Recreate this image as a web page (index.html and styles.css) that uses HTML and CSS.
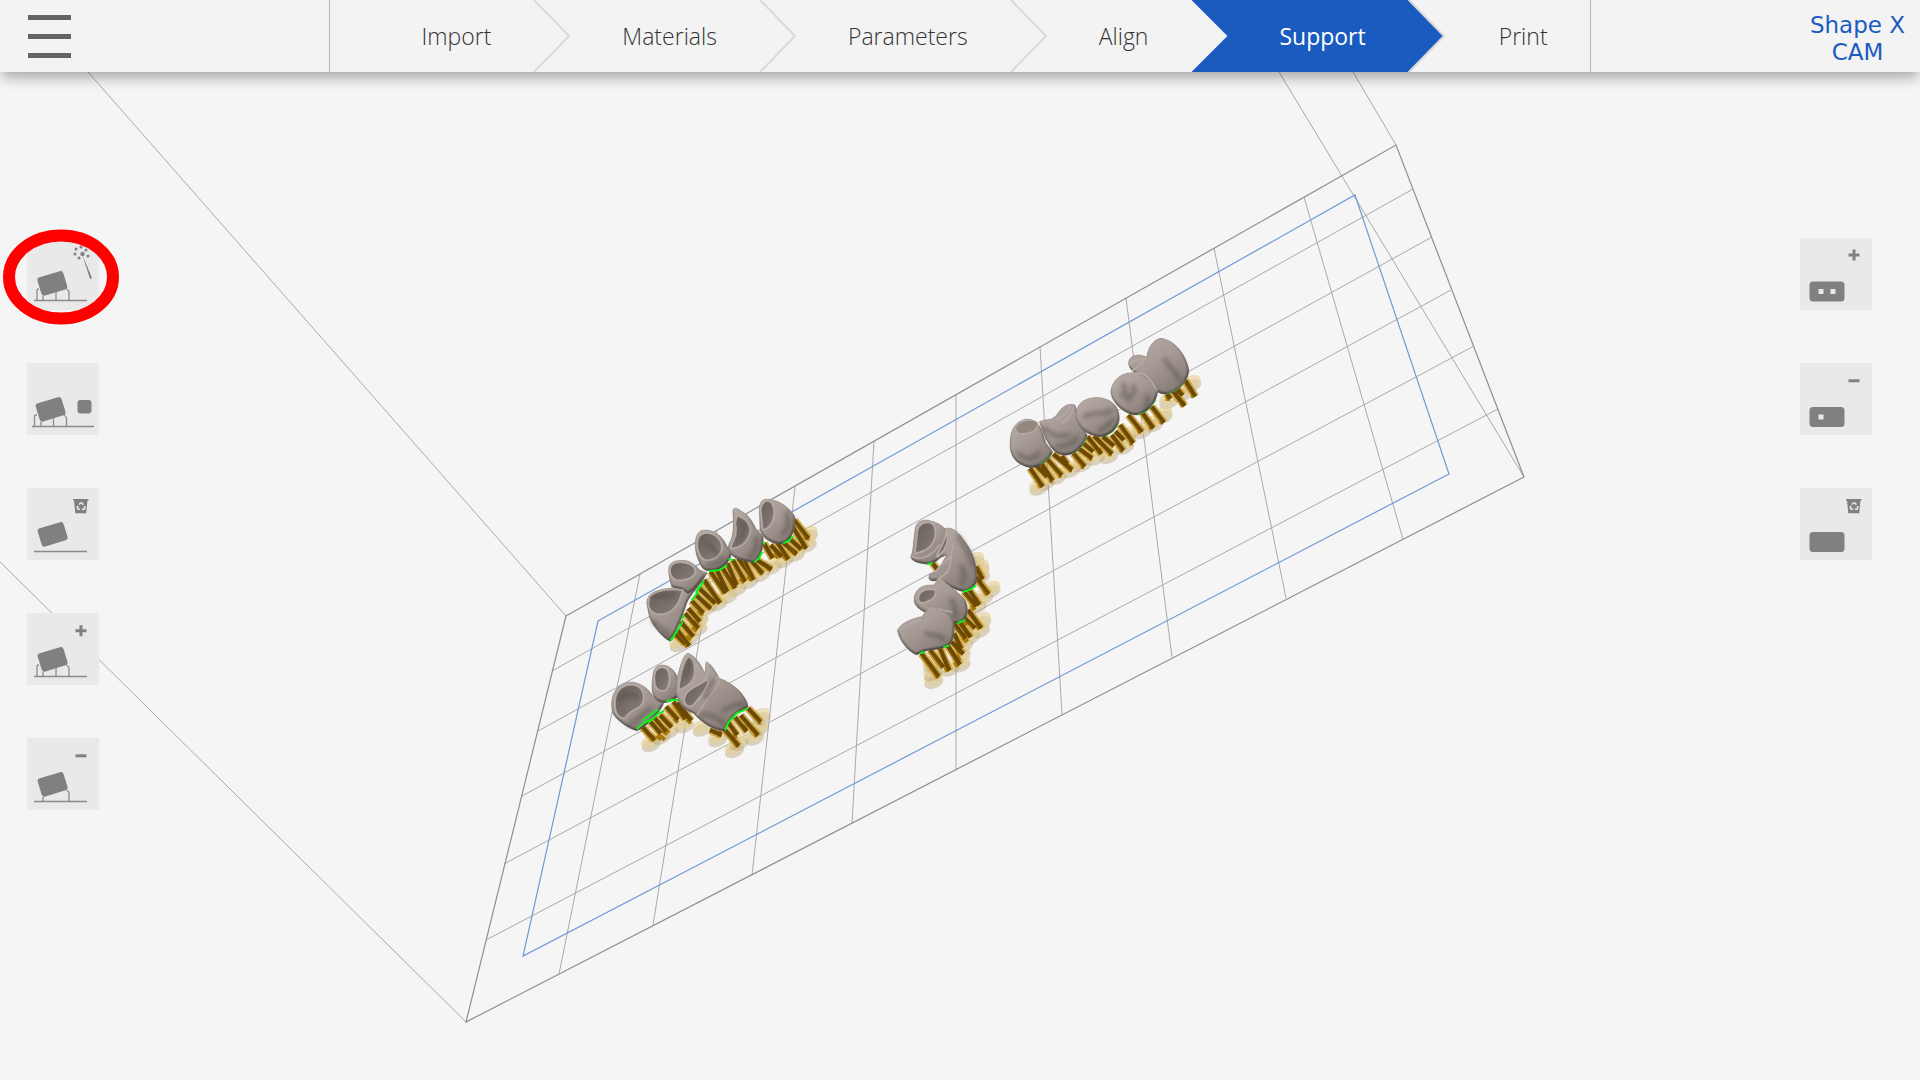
FILE: index.html
```html
<!DOCTYPE html>
<html lang="en">
<head>
<meta charset="utf-8">
<meta name="viewport" content="width=device-width, initial-scale=1">
<title>Shape X CAM</title>
<link rel="stylesheet" href="styles.css">
</head>
<body>
<header class="topbar">
  <button class="menu" type="button" aria-label="Menu"><span></span><span></span><span></span></button>
  <nav class="steps" aria-label="Workflow">
    <a class="step" href="#import">Import<svg class="chevron" viewBox="0 0 36 72" aria-hidden="true"><path d="M0 0L35 36L0 72"/></svg></a>
    <a class="step" href="#materials">Materials<svg class="chevron" viewBox="0 0 36 72" aria-hidden="true"><path d="M0 0L35 36L0 72"/></svg></a>
    <a class="step" href="#parameters">Parameters<svg class="chevron" viewBox="0 0 36 72" aria-hidden="true"><path d="M0 0L35 36L0 72"/></svg></a>
    <a class="step" href="#align">Align</a>
    <a class="step active" href="#support" aria-current="step"><span>Support</span><svg class="chevron" viewBox="0 0 36 72" aria-hidden="true"><path d="M0 0L35 36L0 72"/></svg></a>
    <a class="step" href="#print">Print</a>
  </nav>
  <p class="brand">Shape X<br>CAM</p>
</header>

<main class="workspace">
  <svg class="scene" viewBox="0 72 1920 1008" role="img" aria-label="Build platform with dental parts">
    <defs>
      <linearGradient id="enamel" x1="0" y1="0" x2=".7" y2="1">
        <stop offset="0" stop-color="#b8ada6"/><stop offset=".5" stop-color="#a69b94"/><stop offset="1" stop-color="#857b75"/>
      </linearGradient>
      <linearGradient id="hollow" x1="0" y1="0" x2="1" y2="1">
        <stop offset="0" stop-color="#665f5a"/><stop offset=".6" stop-color="#7a716c"/><stop offset="1" stop-color="#8f857f"/>
      </linearGradient>
      <filter id="relief" x="-5%" y="-5%" width="110%" height="110%" color-interpolation-filters="sRGB">
        <feGaussianBlur in="SourceAlpha" stdDeviation="4" result="b"/>
        <feDiffuseLighting in="b" surfaceScale="7" diffuseConstant="1.2" lighting-color="#fff" result="l"><feDistantLight azimuth="250" elevation="58"/></feDiffuseLighting>
        <feComposite in="l" in2="SourceGraphic" operator="arithmetic" k1=".6" k3=".4" result="m"/>
        <feComposite in="m" in2="SourceAlpha" operator="in" result="n"/>
        <feMerge><feMergeNode in="SourceGraphic"/><feMergeNode in="n"/></feMerge>
      </filter>
      <filter id="soft" x="-30%" y="-30%" width="160%" height="160%"><feGaussianBlur stdDeviation="7"/></filter>
      <g id="pad"><ellipse cx="-3" cy="12" rx="30" ry="18" transform="rotate(-22)" fill="#b7a77a" fill-opacity=".45"/><ellipse rx="30" ry="18" transform="rotate(-22)" fill="#e6cf8f" fill-opacity=".6"/></g>
    </defs>

    <g class="grid">
      <path d="M640 574L559 974M717 530L653 925M795 487L752 875M874 441L852 823M956 394V770M1040 347L1062 714M1126 298L1172 657M1214 248L1286 598M1304 197L1403 539"/>
      <path d="M552 671L1413 189M538 731L1432 237M522 796L1451 290M504 864L1474 346M486 940L1498 409"/>
      <path d="M566 616L88 72M466 1022L-8 554M1396 145L1353 72M1524 477L1279 72"/>
    </g>
    <path class="plate" d="M566 616L1396 145L1524 477L466 1022Z"/>
    <path class="safe" d="M598 621L1355 195L1449 474L523 956Z"/>

    <!-- upper left bridge -->
    <g transform="translate(590 480) scale(.33333)">
      <g>
        <use href="#pad" x="654" y="157"/><use href="#pad" x="650" y="186"/><use href="#pad" x="615" y="214"/><use href="#pad" x="580" y="232"/><use href="#pad" x="545" y="252"/><use href="#pad" x="510" y="275"/><use href="#pad" x="475" y="295"/><use href="#pad" x="440" y="317"/><use href="#pad" x="412" y="340"/><use href="#pad" x="382" y="362"/><use href="#pad" x="350" y="375"/><use href="#pad" x="326" y="410"/><use href="#pad" x="322" y="438"/><use href="#pad" x="298" y="465"/><use href="#pad" x="266" y="484"/>
      </g>
      <use class="amber" href="#pins-a"/>
      <path class="foot" d="M652 170l-4 10M645 196l-5 10M617 213l-8 10M590 228l-8 10M562 222l-8 10M540 262l-8 8M515 274l-8 8M484 292l-8 8M460 298l-8 8M436 312l-8 8M408 328l-8 8M386 360l-8 8M360 378l-8 8M336 396l-8 8M322 425l-8 8M318 443l-8 8M300 470l-8 8M290 490l-8 8"/>
      <g class="pin"><path id="pins-a" d="M612 120L655 175M608 140L648 205M592 170L634 208M580 188L620 222M562 188L595 238M542 195L575 230M522 190L548 235M500 240L545 268M485 244L518 280M462 240L490 300M445 235L485 290M428 240L465 305M412 250L440 315M398 265L435 325M380 270L412 335M362 275L405 340M342 300L390 370M328 325L376 370M318 345L362 385M305 362L340 400M295 385L330 425M285 400L325 445M272 425L310 470M262 450L298 498M255 462L285 490"/></g>
      <path class="shine" d="M612 125L651 176M588 185L615 222M558 192L590 238M458 242L485 300M425 244L460 305M394 265L430 325M359 280L400 340M338 305L384 370M302 364L335 400M282 404L320 445M258 454L292 498"/>
      <g class="tooth">
        <path d="M170 370C172 335 205 325 275 322L330 270L352 278C330 320 305 335 290 370C278 410 262 450 240 484C215 470 190 440 178 410Z"/>
        <path d="M236 270C234 245 260 238 290 242C320 250 328 275 345 285C330 310 300 345 290 340C285 325 250 325 245 320C240 300 236 290 236 270Z"/>
        <path d="M316 185C318 160 330 148 350 150C385 155 400 175 412 200L425 220C420 250 390 275 360 272C335 275 330 250 325 240C316 220 315 200 316 185Z"/>
        <path d="M428 90C435 78 445 88 460 97C480 110 490 130 497 145L520 170C520 200 515 240 490 248C470 245 440 240 425 225C410 210 415 195 420 185C430 170 432 130 428 90Z"/>
        <path d="M508 90C508 62 520 52 545 60C570 62 600 85 615 110C615 150 605 190 570 192C540 192 515 170 510 150Z"/>
      </g>
      <g class="cavity">
        <path d="M178 350C200 330 240 325 278 330C270 360 262 385 235 398C205 410 180 400 175 375Z"/>
        <path d="M240 270C240 250 262 243 285 248C308 252 320 266 315 280C305 298 280 304 258 300C245 295 240 285 240 270Z"/>
        <path d="M322 190C322 165 340 155 360 160C385 165 398 190 396 205C390 235 365 243 345 240C328 232 320 210 322 190Z"/>
        <path d="M440 108C465 112 485 135 480 160C470 190 450 205 422 205C425 185 445 170 436 130Z"/>
        <path d="M512 90C514 66 530 58 542 66C556 80 555 110 545 130C535 145 525 150 518 148Z"/>
      </g>
      <g class="shade"><path d="M190 425C210 445 225 450 240 470M590 100C600 130 590 150 580 160M355 255C380 255 390 245 400 235M500 175C502 205 490 220 480 232M195 350C215 345 235 350 250 345M350 190C360 200 370 200 380 220M460 130C465 150 460 170 450 180"/></g>
      <path class="contact" d="M242 482L260 455L278 425M282 405L275 418M325 335L305 362M342 302L318 340L328 318M357 274L388 270L412 255M415 238L430 240M492 246L508 234L516 215M520 186L524 194M580 190L600 180L608 168"/>
    </g>

    <!-- lower left bridge -->
    <g transform="translate(590 480) scale(.33333)">
      <g>
        <use href="#pad" x="182" y="784"/><use href="#pad" x="212" y="762"/><use href="#pad" x="236" y="745"/><use href="#pad" x="244" y="700"/><use href="#pad" x="282" y="728"/><use href="#pad" x="335" y="738"/><use href="#pad" x="382" y="770"/><use href="#pad" x="432" y="802"/><use href="#pad" x="445" y="780"/><use href="#pad" x="492" y="765"/><use href="#pad" x="506" y="738"/><use href="#pad" x="512" y="704"/>
      </g>
      <use class="amber" href="#pins-b"/>
      <path class="foot" d="M195 770l-10 10M215 765l-12 12M235 748l-14 14M222 770l-8 8M262 718l-8 8M300 720l-8 8M395 762l-12 -2M445 792l-10 4M440 765l-10 4M500 762l-8 2M512 724l-8 2M470 740l-10 8"/>
      <g class="pin"><path id="pins-b" d="M155 738L192 780M175 718L212 760M192 712L228 755M210 705L245 742M228 680L264 720M250 665L286 718M262 668L304 722M360 750L395 765M405 750L446 798M415 728L442 765M435 712L470 755M452 706L504 766M474 685L512 726"/></g>
      <path class="shine" d="M151 742L186 780M188 714L222 755M246 668L282 718M402 754L440 798M431 714L464 755M450 712L498 766M471 690L506 726"/>
      <g class="tooth">
        <path d="M65 680C62 640 85 608 120 606C150 606 175 625 190 650L222 668C210 700 165 745 140 752C110 745 75 715 68 700Z"/>
        <path d="M188 590C190 560 205 552 225 556C245 560 260 580 265 600L268 645C250 668 215 675 200 660C185 650 183 620 188 590Z"/>
        <path d="M260 600C270 560 280 520 295 520C320 530 335 560 345 580L348 545C362 550 375 570 388 595C430 610 465 640 475 680C455 695 425 700 405 754C360 750 330 720 310 700C285 690 268 680 258 640Z"/>
      </g>
      <g class="cavity">
        <path d="M75 670C75 630 100 612 130 614C160 620 168 650 155 675C140 690 120 690 105 715C85 715 74 700 75 670Z"/>
        <path d="M193 590C195 562 215 558 230 566C242 585 240 610 230 630C215 638 200 630 195 615Z"/>
        <path d="M268 610C275 570 285 535 298 530C315 545 318 575 310 595C300 615 280 625 266 630Z"/>
        <path d="M282 660C285 635 305 625 330 612C345 605 352 595 355 605C350 630 330 650 310 675C295 685 285 675 282 660Z"/>
      </g>
      <path class="rim" d="M349 548C360 575 350 590 340 605M388 598C390 620 350 650 322 705M382 590C380 625 345 635 325 660"/>
      <g class="shade"><path d="M335 705C360 700 380 710 400 730M400 690C425 680 440 670 462 672M90 660C100 640 120 640 140 650M120 735C140 725 160 700 180 685M345 650C355 630 365 620 370 600M285 590C295 575 300 560 300 545"/></g>
      <path class="contact" d="M140 748L160 730L190 715L205 700M158 722L175 708L205 688M175 728L200 705L222 692M228 664L245 660L265 660M405 750L415 728L440 700L472 686"/>
    </g>

    <!-- centre bridge -->
    <g transform="translate(880 500) scale(.33333)">
      <g>
        <use href="#pad" x="284" y="176"/><use href="#pad" x="298" y="198"/><use href="#pad" x="300" y="222"/><use href="#pad" x="332" y="262"/><use href="#pad" x="310" y="284"/><use href="#pad" x="290" y="310"/><use href="#pad" x="304" y="356"/><use href="#pad" x="300" y="382"/><use href="#pad" x="270" y="402"/><use href="#pad" x="250" y="425"/><use href="#pad" x="242" y="455"/><use href="#pad" x="242" y="485"/><use href="#pad" x="208" y="498"/><use href="#pad" x="160" y="535"/><use href="#pad" x="158" y="512"/><use href="#pad" x="156" y="485"/>
      </g>
      <use class="amber" href="#pins-c"/>
      <path class="foot" d="M305 232l-10 6M322 275l-10 6M296 300l-12 8M285 320l-12 6M300 375l-12 8M268 400l-14 8M262 415l-12 8M242 450l-12 6M235 490l-12 6M205 505l-12 4M175 525l-10 4M240 470l-14 8M260 365l-12 10"/>
      <g class="pin"><path id="pins-c" d="M158 190L175 212M288 200L308 238M282 225L326 282M265 265L298 315M252 275L288 320M264 330L304 385M250 350L285 385M236 362L272 412M222 370L256 415M222 400L244 446M200 432L240 494M178 440L208 512M150 450L190 502M124 460L176 530M215 425L250 462"/></g>
      <path class="shine" d="M278 228L320 282M249 278L283 320M246 352L280 385M218 374L250 415M196 436L233 494M146 452L186 502M120 462L170 530"/>
      <g class="tooth">
        <path d="M105 90C105 65 130 55 150 62C180 68 200 85 205 105L190 160C175 185 155 195 135 192C110 190 90 180 92 168C100 160 100 120 105 90Z"/>
        <path d="M195 85C225 78 245 110 262 135C280 160 292 200 291 240C285 265 265 275 250 275C220 270 190 245 175 240C150 250 140 235 150 222C170 220 185 190 200 165L165 180C160 165 185 140 190 120Z"/>
        <path d="M102 300C102 270 125 252 160 255L182 232C200 255 235 275 255 300C270 330 262 365 235 370C210 370 180 360 150 345C120 330 103 320 102 300Z"/>
        <path d="M52 392C60 370 95 355 125 350L150 318C180 325 215 345 222 370C225 400 222 430 200 440C170 452 140 445 110 465C85 455 60 425 52 392Z"/>
      </g>
      <g class="cavity">
        <path d="M112 95C115 70 140 62 158 72C172 90 168 120 150 140C135 155 118 155 105 162Z"/>
        <path d="M115 298C115 275 135 264 166 270C170 290 160 298 145 303C130 312 118 312 115 298Z"/>
        <path d="M178 150C192 125 196 110 202 98C206 125 198 150 172 172Z"/>
      </g>
      <path class="rim" d="M220 138C208 165 218 190 202 215C195 225 180 232 172 238M215 170C195 180 180 200 165 215M60 388C80 375 105 362 122 360M95 170C120 180 150 175 178 135M175 325C190 335 205 330 218 338"/>
      <g class="shade"><path d="M235 110C250 135 270 160 280 195M215 300C230 320 225 340 225 350M140 400C160 410 180 400 190 420M245 200C255 220 250 240 245 250"/></g>
      <path class="contact" d="M142 193L158 190M248 276L272 268L288 256M232 370L256 360M120 460L134 456M190 442L208 436"/>
    </g>

    <!-- upper right bridge -->
    <g transform="translate(990 320) scale(.33333)">
      <g>
        <use href="#pad" x="604" y="185"/><use href="#pad" x="575" y="215"/><use href="#pad" x="535" y="236"/><use href="#pad" x="518" y="280"/><use href="#pad" x="490" y="305"/><use href="#pad" x="455" y="325"/><use href="#pad" x="410" y="340"/><use href="#pad" x="402" y="372"/><use href="#pad" x="355" y="400"/><use href="#pad" x="315" y="405"/><use href="#pad" x="275" y="425"/><use href="#pad" x="240" y="442"/><use href="#pad" x="200" y="462"/><use href="#pad" x="165" y="480"/><use href="#pad" x="145" y="495"/>
      </g>
      <use class="amber" href="#pins-d"/>
      <path class="foot" d="M155 495l-10 -2M188 480l-10 0M215 465l-10 0M246 448l-10 0M282 438l-10 0M306 412l-10 2M335 390l-12 4M365 400l-10 0M398 388l-10 2M428 368l-10 0M450 332l-8 2M490 322l-12 -4M520 305l-10 -2M582 254l-8 -6M612 226l-8 -2M540 235l-12 -2M570 215l-10 -4"/>
      <g class="pin"><path id="pins-d" d="M120 445L158 500M140 438L172 470M155 432L188 482M172 418L215 466M190 402L246 450M215 408L232 432M250 400L284 440M265 385L306 415M280 370L310 395M292 350L334 402M312 348L366 402M338 350L372 378M365 345L400 392M376 335L402 360M390 315L430 370M415 285L456 336M455 275L490 325M485 260L522 308M530 222L542 236M550 214L584 258M562 208L578 226M586 182L616 230"/></g>
      <path class="shine" d="M116 448L152 500M168 420L209 466M246 402L278 440M288 354L328 402M361 348L394 392M386 318L424 370M411 288L450 336M481 262L516 308M582 186L610 230"/>
      <g class="tooth">
        <path d="M470 110C475 75 500 50 520 56C560 65 590 110 597 150C595 185 565 215 535 222C510 225 500 215 490 200L430 155C410 140 412 115 430 108C450 100 460 110 470 110Z"/>
        <path d="M362 215C365 185 390 158 425 158C460 160 495 190 503 215C500 250 470 280 440 285C405 285 365 250 362 215Z"/>
        <path d="M60 370C60 320 85 298 115 297C145 300 160 330 165 365L188 395C180 425 140 445 120 443C80 435 58 410 60 370Z"/>
        <path d="M148 305C170 295 180 305 200 285C215 260 235 248 255 255C265 290 275 320 292 345C285 380 250 410 220 405C190 400 180 380 165 350Z"/>
        <path d="M258 285C258 250 285 230 330 233C370 238 390 265 388 300C380 335 350 352 325 350C290 345 258 320 258 285Z"/>
      </g>
      <path class="dimple" d="M76 325C85 300 125 294 143 308C146 332 118 345 84 340Z"/>
      <path class="rim" d="M200 300C220 290 235 275 240 258M215 310C235 300 245 280 250 265M418 135C425 120 450 115 468 118M428 152C440 140 455 135 460 120M436 160C465 155 480 175 500 210M368 205C372 195 385 190 390 188"/>
      <g class="shade"><path d="M395 225C420 240 440 220 430 200M400 195C410 215 405 230 415 240M285 290C310 270 340 290 365 270M330 330C350 320 360 310 368 300M165 325C190 350 210 350 235 345M200 380C225 380 250 370 260 355M85 400C105 420 125 420 145 400M525 120C545 150 560 160 570 180M470 230C480 240 475 250 465 260"/></g>
      <path class="contact thin" d="M150 432L170 420L188 400M250 402L275 380L292 350M345 350L370 335L388 310M440 285L470 275L500 240M530 222L560 210L585 182"/>
    </g>
  </svg>

  <div class="toolbar left" role="toolbar" aria-label="Supports">
    <div class="highlighted">
      <button class="tool" type="button" aria-label="Generate supports automatically">
        <svg viewBox="0 0 72 72"><rect x="12" y="36" width="27" height="19" rx="3" transform="rotate(-17 25 46)"/><path class="ln" d="M7 62.500H60M10 62V52Q10 51 12 51M16 62V58M29 62V53M42 62V54Q42 52 39 51"/><path d="M55 16L65 40L63 41Z"/><g><circle cx="49" cy="11" r="1.5"/><circle cx="54" cy="9" r="1.5"/><circle cx="59" cy="12" r="1.5"/><circle cx="61" cy="18" r="1.5"/><circle cx="52" cy="20" r="1.5"/><circle cx="48" cy="16" r="1.5"/><circle cx="55.500" cy="16" r="2.200"/></g></svg>
      </button>
      <svg class="ring" viewBox="0 0 116 96" aria-hidden="true"><ellipse cx="58" cy="48" rx="52" ry="41.500"/></svg>
    </div>
    <button class="tool" type="button" aria-label="Support selected part">
      <svg viewBox="0 0 72 72"><rect x="10" y="37" width="27" height="19" rx="3" transform="rotate(-17 23 46)"/><path class="ln" d="M5 63.500H67M7.500 63V53Q8 52 10 52M14 63V59M26.500 63V54M39.500 63V55Q39 53 37 52"/><rect x="50.500" y="37" width="14" height="13.500" rx="3"/></svg>
    </button>
    <button class="tool" type="button" aria-label="Delete all supports">
      <svg viewBox="0 0 72 72"><rect x="12" y="37" width="27" height="19" rx="3" transform="rotate(-17 25 46)"/><path class="ln" d="M7 63.500H60"/><path d="M46 11H61.500V12.500H60.500L59.200 25.300H48.300L47 12.500H46Z"/><path class="recycle" d="M52 16.500L53.500 15H55L56.300 16.700M57.200 18L58 19.500L57 21.200H54.800M53 21.200H51.200L50.200 19.500L51.200 17.800"/></svg>
    </button>
    <button class="tool" type="button" aria-label="Add support">
      <svg viewBox="0 0 72 72"><rect x="12" y="37" width="27" height="19" rx="3" transform="rotate(-17 25 46)"/><path class="ln" d="M7 63.500H60M10 63V53Q10 52 12 52M16 63V59M29 63V54M42 63V55Q42 53 39 52"/><path d="M52.500 12.300H55.500V16.300H59.500V19.300H55.500V23.300H52.500V19.300H48.500V16.300H52.500Z"/></svg>
    </button>
    <button class="tool" type="button" aria-label="Remove support">
      <svg viewBox="0 0 72 72"><rect x="12" y="37" width="27" height="19" rx="3" transform="rotate(-17 25 46)"/><path class="ln" d="M7 63.500H60M16 63V59M42 63V55Q42 53 39 52"/><path d="M48.500 16.300H59.500V19.300H48.500Z"/></svg>
    </button>
  </div>

  <div class="toolbar right" role="toolbar" aria-label="Drainage">
    <button class="tool" type="button" aria-label="Add hole">
      <svg viewBox="0 0 72 72"><path fill-rule="evenodd" d="M13 43.500H41Q44.500 43.500 44.500 47V60Q44.500 63.500 41 63.500H13Q9.500 63.500 9.500 60V47Q9.500 43.500 13 43.500ZM18.500 51V56H23.500V51ZM30.500 51V56H35.500V51Z"/><path d="M52.500 11.500H55.500V15.500H59.500V18.500H55.500V22.500H52.500V18.500H48.500V15.500H52.500Z"/></svg>
    </button>
    <button class="tool" type="button" aria-label="Remove hole">
      <svg viewBox="0 0 72 72"><path fill-rule="evenodd" d="M13 44H41Q44.500 44 44.500 47.500V60.500Q44.500 64 41 64H13Q9.500 64 9.500 60.500V47.500Q9.500 44 13 44ZM18.500 51.500V56.500H23.500V51.500Z"/><path d="M48.500 16.300H59.500V19.300H48.500Z"/></svg>
    </button>
    <button class="tool" type="button" aria-label="Delete all holes">
      <svg viewBox="0 0 72 72"><rect x="9.500" y="44" width="35" height="20" rx="3.500"/><path d="M46 11H61.500V12.500H60.500L59.200 25.300H48.300L47 12.500H46Z"/><path class="recycle" d="M52 16.500L53.500 15H55L56.300 16.700M57.200 18L58 19.500L57 21.200H54.800M53 21.200H51.200L50.200 19.500L51.200 17.800"/></svg>
    </button>
  </div>
</main>
</body>
</html>
```
FILE: styles.css
```css
* { box-sizing: border-box; }

body {
  margin: 0;
  min-height: 100vh;
  background: #f5f5f5;
  color: #333;
  font-family: "Open Sans", "Noto Sans", sans-serif;
  overflow-x: hidden;
}

button {
  border: 0;
  padding: 0;
  cursor: pointer;
}

/* top bar */
.topbar {
  position: relative;
  z-index: 1;
  display: grid;
  grid-template-columns: 1fr auto 1fr;
  align-items: center;
  height: 72px;
  background: #f3f3f3;
  box-shadow: 0 8px 12px -2px rgba(0, 0, 0, .3);
}

.menu {
  display: flex;
  flex-direction: column;
  gap: 14px;
  width: 43px;
  margin-left: 28px;
  background: none;
}

.menu span {
  height: 5px;
  background: #646464;
}

.steps {
  display: flex;
  height: 72px;
  border-left: 1px solid #b4b4b4;
  border-right: 1px solid #b4b4b4;
}

.step {
  position: relative;
  display: flex;
  align-items: center;
  padding: 0 79px 0 52px;
  color: #333;
  font-size: 23px;
  font-weight: 300;
  text-decoration: none;
}

.step:first-child { padding-left: 91px; }
.step:last-child { padding: 0 42px 0 54px; }

.chevron {
  position: absolute;
  top: 0;
  right: 0;
  width: 36px;
  height: 72px;
  fill: none;
  stroke: #d9d9d9;
  stroke-width: 2;
}

.step.active { color: #fff; font-weight: 400; }
.step.active span { position: relative; }

.step.active::before {
  content: "";
  position: absolute;
  inset: 0 1px 0 -36px;
  background: #1a5bc0;
  clip-path: polygon(0 0, calc(100% - 36px) 0, 100% 50%, calc(100% - 36px) 100%, 0 100%, 36px 50%);
}

.brand {
  justify-self: end;
  margin: 0;
  padding: 5px 15px 0 0;
  color: #1a5bc0;
  font-family: "DejaVu Sans", sans-serif;
  font-size: 23px;
  line-height: 27px;
  text-align: center;
}

/* workspace: the scene lies under the two tool columns */
.workspace {
  display: grid;
  grid-template-columns: auto 1fr auto;
  align-items: start;
}

.scene {
  grid-area: 1 / 1 / 2 / 4;
  display: block;
  width: 100%;
  height: auto;
}

.toolbar {
  position: relative;
  grid-row: 1;
  display: flex;
  flex-direction: column;
  gap: 53px;
  padding-top: 166px;
}

.toolbar.left { grid-column: 1; margin-left: 27px; }
.toolbar.right { grid-column: 3; margin-right: 48px; }

.tool {
  display: block;
  width: 72px;
  height: 72px;
  background: #e9e9e9;
}

.tool svg {
  display: block;
  width: 72px;
  height: 72px;
  fill: #808080;
}

.tool .ln { fill: none; stroke: #8a8a8a; stroke-width: 1.3; }
.tool .recycle { fill: none; stroke: #e9e9e9; stroke-width: 1.5; }

.highlighted { position: relative; }

.ring {
  position: absolute;
  top: -9px;
  left: -24px;
  width: 116px;
  height: 96px;
  fill: none;
  stroke: #f00;
  stroke-width: 12;
  pointer-events: none;
}

/* scene */
.grid { fill: none; stroke: #a9a9a9; stroke-width: 1; }
.plate { fill: none; stroke: #8f8f8f; stroke-width: 1.2; }
.safe { fill: none; stroke: #7099d8; stroke-width: 1.2; }
.amber { fill: none; stroke: #c6961f; stroke-width: 24; opacity: .75; }
.pin { fill: none; stroke: #6b4904; stroke-width: 13; }
.shine { fill: none; stroke: #8d6207; stroke-width: 3; }
.foot { fill: none; stroke: #a97808; stroke-width: 18; }
.tooth { fill: url(#enamel); stroke: #857a74; stroke-width: 1; }
.tooth path { filter: url(#relief); }
.cavity { fill: url(#hollow); stroke: #b5aaa3; stroke-width: 5; stroke-linejoin: round; }
.dimple { fill: #93887f; stroke: #b5aaa3; stroke-width: 4; }
.rim { fill: none; stroke: #b5aaa3; stroke-width: 5; stroke-linecap: round; }
.shade { fill: none; stroke: #4f4743; stroke-width: 14; stroke-linecap: round; opacity: .45; filter: url(#soft); }
.contact { fill: none; stroke: #0df01a; stroke-width: 6; }
.contact.thin { stroke: #4fc843; stroke-width: 2; }
```
